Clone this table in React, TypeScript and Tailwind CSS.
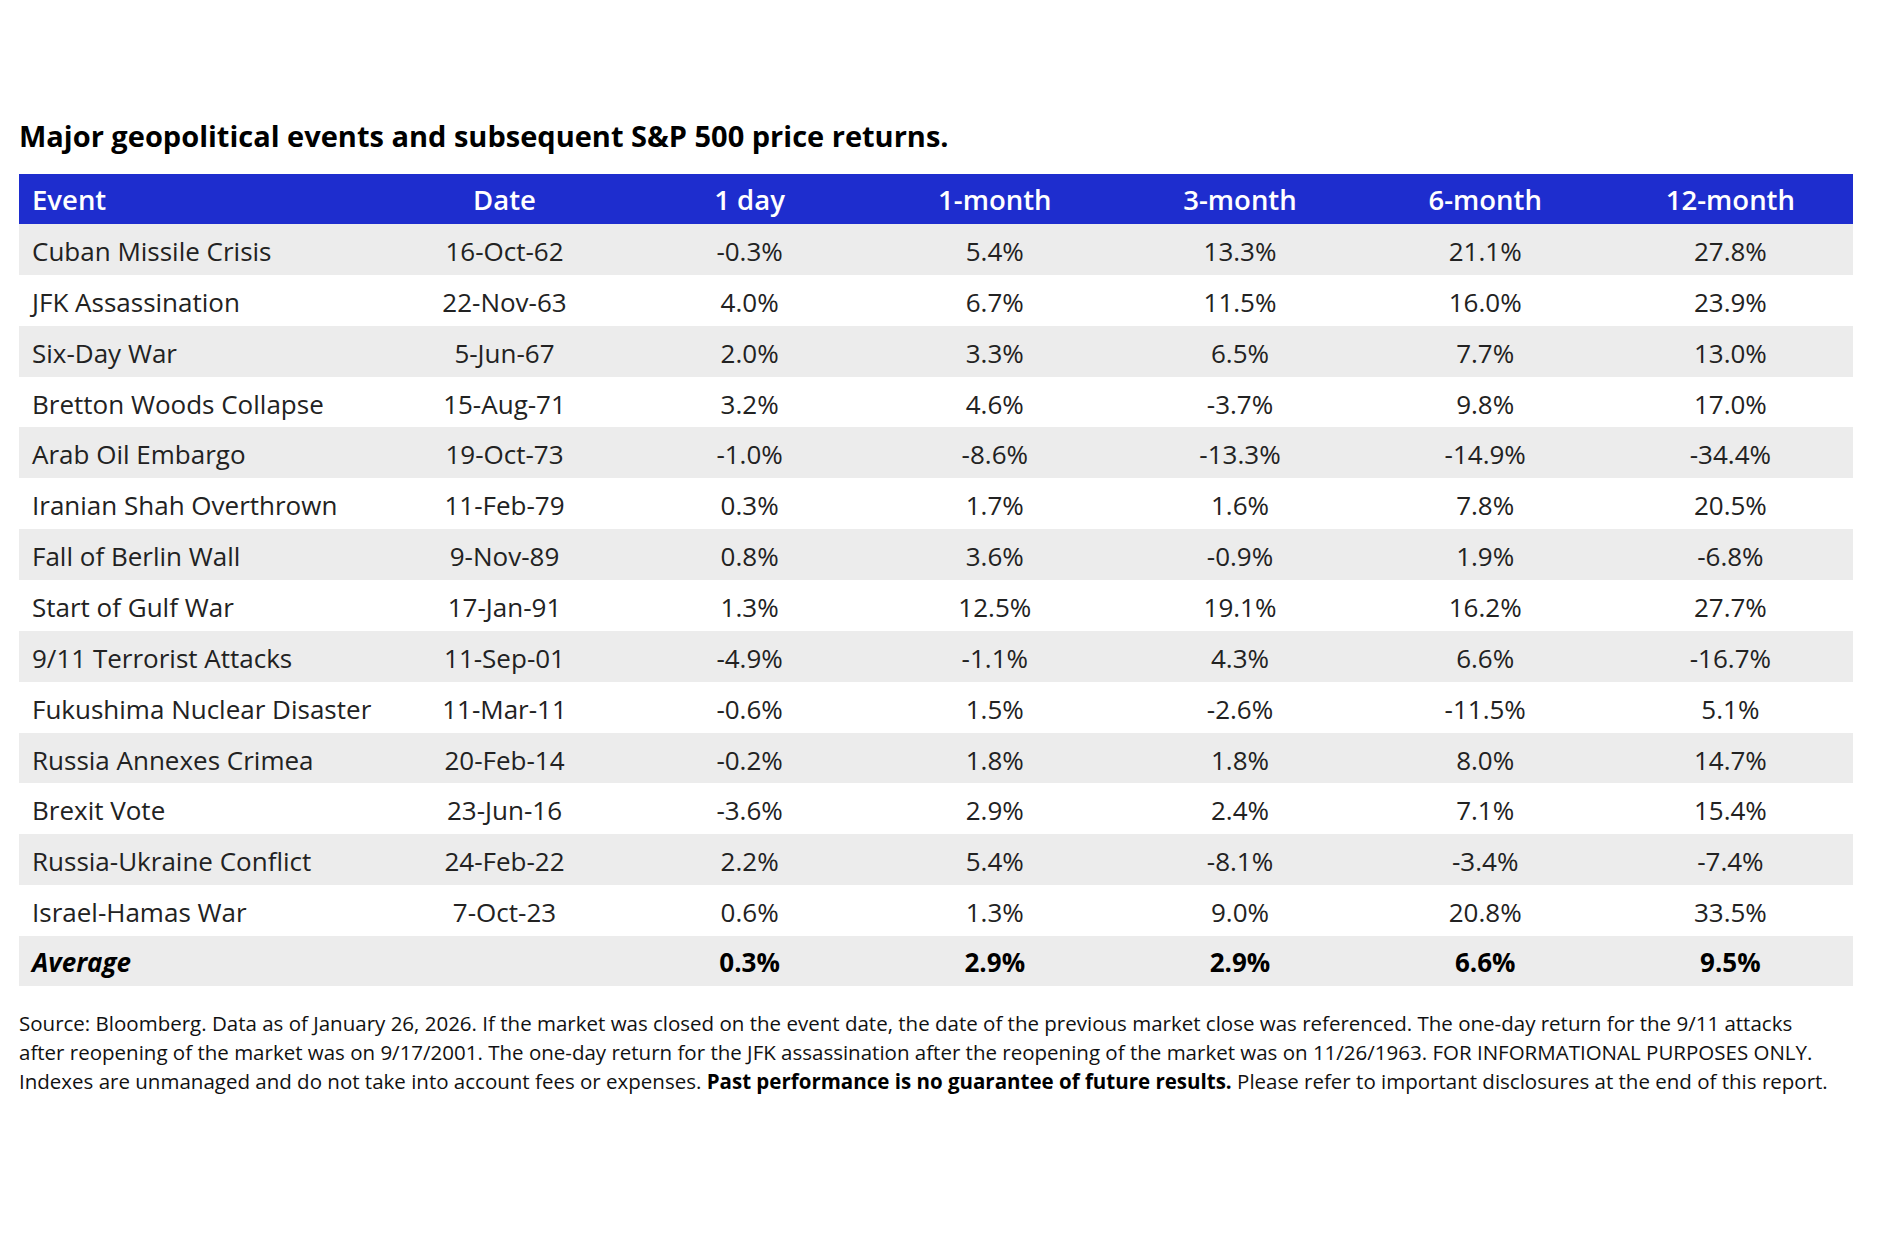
import React from "react";

const rows: [string, string, string, string, string, string, string][] = [
  ["Cuban Missile Crisis", "16-Oct-62", "-0.3%", "5.4%", "13.3%", "21.1%", "27.8%"],
  ["JFK Assassination", "22-Nov-63", "4.0%", "6.7%", "11.5%", "16.0%", "23.9%"],
  ["Six-Day War", "5-Jun-67", "2.0%", "3.3%", "6.5%", "7.7%", "13.0%"],
  ["Bretton Woods Collapse", "15-Aug-71", "3.2%", "4.6%", "-3.7%", "9.8%", "17.0%"],
  ["Arab Oil Embargo", "19-Oct-73", "-1.0%", "-8.6%", "-13.3%", "-14.9%", "-34.4%"],
  ["Iranian Shah Overthrown", "11-Feb-79", "0.3%", "1.7%", "1.6%", "7.8%", "20.5%"],
  ["Fall of Berlin Wall", "9-Nov-89", "0.8%", "3.6%", "-0.9%", "1.9%", "-6.8%"],
  ["Start of Gulf War", "17-Jan-91", "1.3%", "12.5%", "19.1%", "16.2%", "27.7%"],
  ["9/11 Terrorist Attacks", "11-Sep-01", "-4.9%", "-1.1%", "4.3%", "6.6%", "-16.7%"],
  ["Fukushima Nuclear Disaster", "11-Mar-11", "-0.6%", "1.5%", "-2.6%", "-11.5%", "5.1%"],
  ["Russia Annexes Crimea", "20-Feb-14", "-0.2%", "1.8%", "1.8%", "8.0%", "14.7%"],
  ["Brexit Vote", "23-Jun-16", "-3.6%", "2.9%", "2.4%", "7.1%", "15.4%"],
  ["Russia-Ukraine Conflict", "24-Feb-22", "2.2%", "5.4%", "-8.1%", "-3.4%", "-7.4%"],
  ["Israel-Hamas War", "7-Oct-23", "0.6%", "1.3%", "9.0%", "20.8%", "33.5%"],
];

const headers = ["Date", "1 day", "1-month", "3-month", "6-month", "12-month"];

export default function App() {
  return (
    <div
      className="w-[1879px] h-[1252px] bg-white text-[#222222] pl-[19px] pt-[119px]"
      style={{ fontFamily: '"Open Sans", "Noto Sans", sans-serif' }}
    >
      <h1 className="text-[29px] leading-[34px] font-bold text-black">
        Major geopolitical events and subsequent S&amp;P 500 price returns.
      </h1>
      <div className="mt-[21px] w-[1834px]">
        <div className="grid grid-cols-[363px_245px_repeat(5,1fr)] h-[50px] pt-[2px] items-center bg-[#1e2dce] text-white font-semibold text-[27.5px]">
          <div className="pl-[13px]">Event</div>
          {headers.map((h) => (
            <div key={h} className="text-center">
              {h}
            </div>
          ))}
        </div>
        {rows.map((r, i) => (
          <div
            key={r[0]}
            className={
              "grid grid-cols-[363px_245px_repeat(5,1fr)] h-[50.86px] pt-[4px] items-center text-[26px] " +
              (i % 2 === 0 ? "bg-[#ececec]" : "bg-white")
            }
          >
            <div className="pl-[13px] whitespace-nowrap">{r[0]}</div>
            {r.slice(1).map((c, j) => (
              <div key={j} className="text-center">
                {c}
              </div>
            ))}
          </div>
        ))}
        <div className="grid grid-cols-[363px_245px_repeat(5,1fr)] h-[50px] pt-[3px] items-center text-[26px] bg-[#ececec] font-bold text-black">
          <div className="pl-[13px] italic">Average</div>
          <div></div>
          <div className="text-center">0.3%</div>
          <div className="text-center">2.9%</div>
          <div className="text-center">2.9%</div>
          <div className="text-center">6.6%</div>
          <div className="text-center">9.5%</div>
        </div>
      </div>
      <div className="mt-[23px] text-[20.5px] leading-[29px] text-[#111111] whitespace-nowrap">
        <div>
          Source: Bloomberg. Data as of January 26, 2026. If the market was closed on the event date, the date of the previous market close was referenced. The one-day return for the 9/11 attacks
        </div>
        <div>
          after reopening of the market was on 9/17/2001. The one-day return for the JFK assassination after the reopening of the market was on 11/26/1963. FOR INFORMATIONAL PURPOSES ONLY.
        </div>
        <div>
          Indexes are unmanaged and do not take into account fees or expenses.{" "}
          <span className="font-bold text-black">Past performance is no guarantee of future results.</span> Please refer to important disclosures at the end of this report.
        </div>
      </div>
    </div>
  );
}
